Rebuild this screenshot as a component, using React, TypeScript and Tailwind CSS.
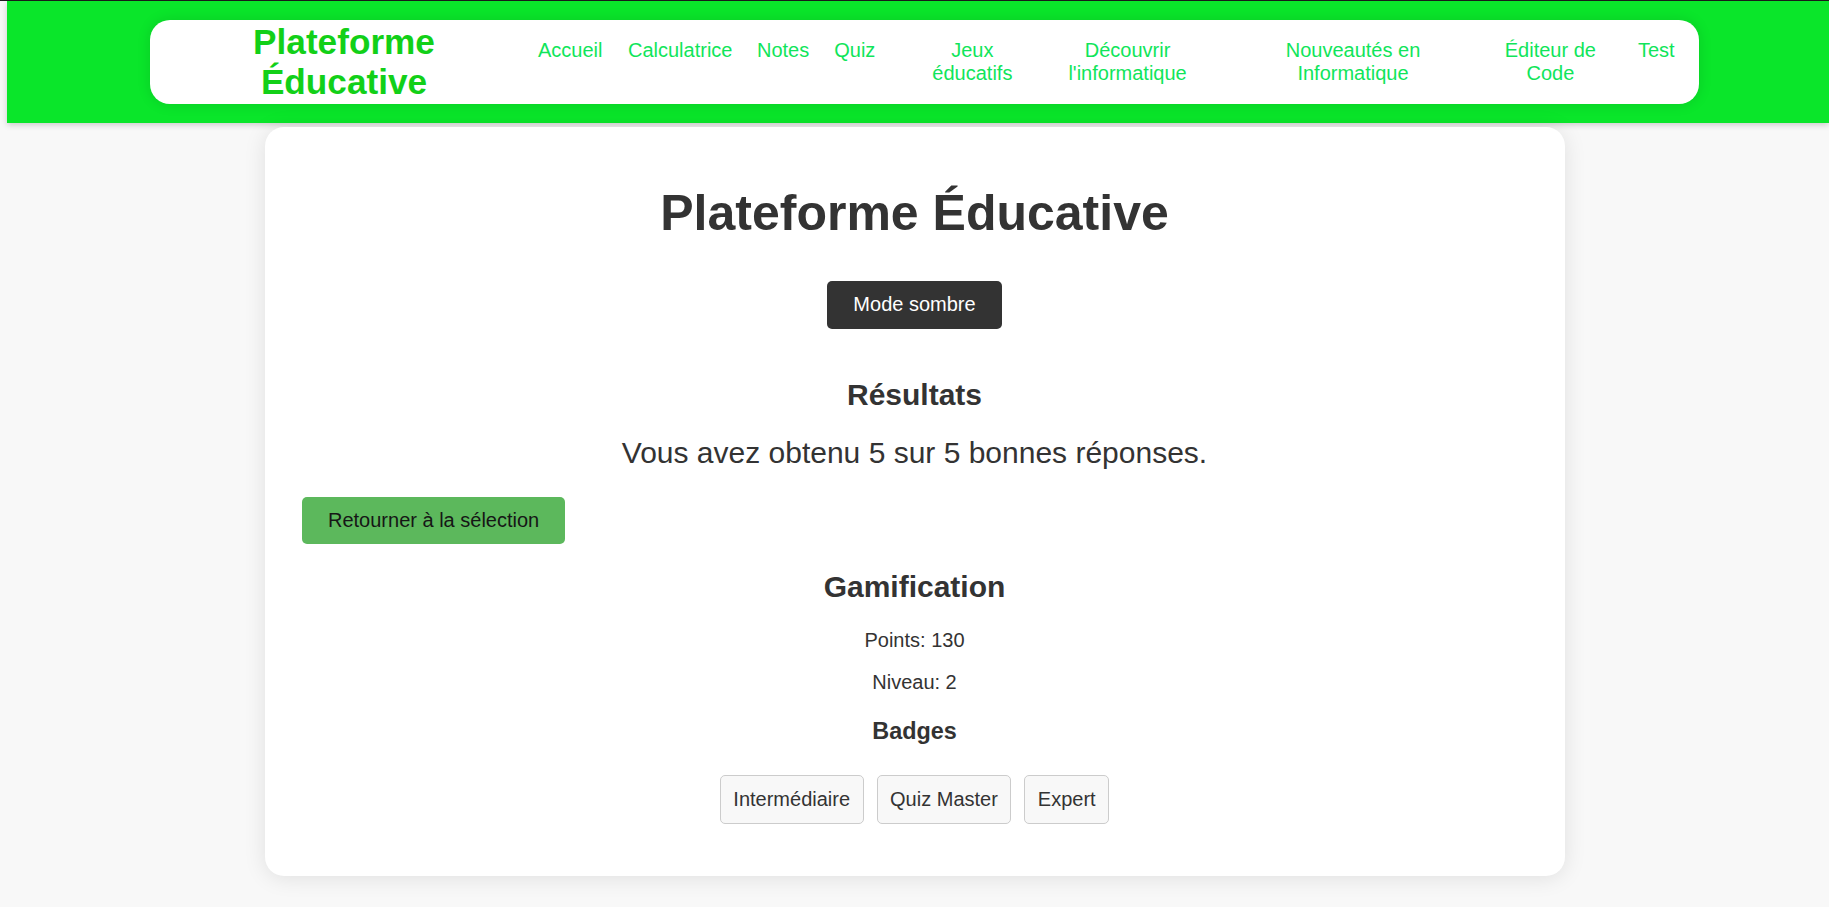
import React from "react";

const font = { fontFamily: '"Liberation Sans", Arial, sans-serif' };

export default function App() {
  return (
    <div className="min-h-screen bg-[#f8f8f8]" style={font}>
      <div className="h-px w-full bg-[#1b1b1b]" />
      <header className="ml-[7px] bg-[#0ae62a] py-[19px] shadow-[0_2px_6px_rgba(0,0,0,0.18)]">
        <nav className="ml-[143px] flex h-[84px] w-[1549px] items-center gap-[20px] rounded-[20px] bg-white pl-[20px] shadow-[0_0_14px_rgba(0,0,0,0.12)]">
          <div className="w-[348px] text-center text-[35.2px] font-bold leading-[1.149] text-[#12d018]">
            Plateforme
            <br />
            Éducative
          </div>
          <ul className="flex items-start whitespace-nowrap text-[20px] leading-[23px] text-[#10e55a]">
            <li>Accueil</li>
            <li className="ml-[25.5px]">Calculatrice</li>
            <li className="ml-[24.5px]">Notes</li>
            <li className="ml-[25px]">Quiz</li>
            <li className="ml-[57px] text-center">
              Jeux
              <br />
              éducatifs
            </li>
            <li className="ml-[56px] text-center">
              Découvrir
              <br />
              l'informatique
            </li>
            <li className="ml-[99px] text-center">
              Nouveautés en
              <br />
              Informatique
            </li>
            <li className="ml-[84.5px] text-center">
              Éditeur de
              <br />
              Code
            </li>
            <li className="ml-[42px]">Test</li>
          </ul>
        </nav>
      </header>

      <main className="mx-auto mt-[4px] w-[1300px] rounded-[19px] bg-white px-[37.5px] pb-[52px] pt-[58px] text-[#333] shadow-[0_2px_22px_rgba(0,0,0,0.1)]">
        <h1 className="text-center text-[50px] font-bold leading-[1.149]">Plateforme Éducative</h1>
        <div className="mt-[38.5px] flex justify-center">
          <button className="h-[48px] rounded-[5px] bg-[#333] px-[26px] text-[20px] leading-[23px] text-white">
            Mode sombre
          </button>
        </div>
        <h2 className="mt-[49.5px] text-center text-[30px] font-bold leading-[1.149]">Résultats</h2>
        <p className="mt-[23.5px] text-center text-[30px] leading-[1.149]">
          Vous avez obtenu 5 sur 5 bonnes réponses.
        </p>
        <button className="mt-[26px] h-[47px] rounded-[5px] bg-[#5cb85c] px-[26px] text-[20px] leading-[23px] text-[#161616]">
          Retourner à la sélection
        </button>
        <h2 className="mt-[26.5px] text-center text-[30px] font-bold leading-[1.149]">Gamification</h2>
        <p className="mt-[24.5px] text-center text-[20px] leading-[23px]">Points: 130</p>
        <p className="mt-[19px] text-center text-[20px] leading-[23px]">Niveau: 2</p>
        <h3 className="mt-[24px] text-center text-[23.4px] font-bold leading-[1.149]">Badges</h3>
        <div className="mt-[29.5px] flex justify-center gap-[13px]">
          {["Intermédiaire", "Quiz Master", "Expert"].map((b) => (
            <span
              key={b}
              className="flex h-[49px] items-center rounded-[5px] border border-[#cccccc] bg-[#f8f8f8] px-[12.5px] text-[20px] leading-[23px] text-[#333]"
            >
              {b}
            </span>
          ))}
        </div>
      </main>
    </div>
  );
}
